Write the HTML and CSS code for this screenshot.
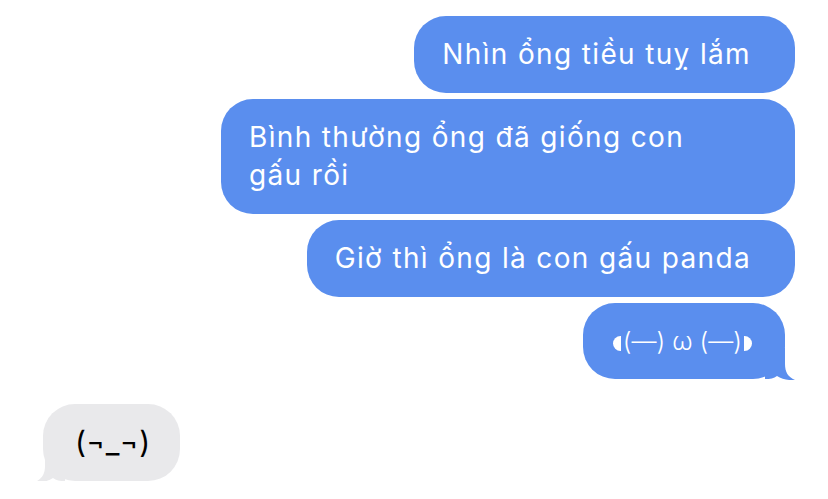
FILE: index.html
```html
<!DOCTYPE html>
<html lang="vi">
<head>
  <meta charset="UTF-8">
  <meta name="viewport" content="width=device-width, initial-scale=1.0">
  <title>Tin nhắn</title>
  <link rel="stylesheet" href="styles.css">
</head>
<body>
  <div class="thread">
    <div class="bubble sent">Nhìn ổng tiều tuỵ lắm</div>
    <div class="bubble sent wrap">Bình thường ổng đã giống con gấu rồi</div>
    <div class="bubble sent">Giờ thì ổng là con gấu panda</div>
    <div class="bubble sent last">
      <span class="kao"><span class="disc left"></span>(—) ω (—)<span class="disc right"></span></span>
      <svg class="tail" viewBox="0 0 30 32" aria-hidden="true">
        <path d="M0 0 H20 V16 C20 24 23 29 30 32 C24 32.5 17 31.5 12 28 C9 30.5 5 31 0 31 Z"/>
      </svg>
    </div>
    <div class="bubble received last">
      <span class="kao">(¬_¬)</span>
      <svg class="tail" viewBox="0 0 30 32" aria-hidden="true">
        <path d="M0 0 H20 V16 C20 24 23 29 30 32 C24 32.5 17 31.5 12 28 C9 30.5 5 31 0 31 Z"/>
      </svg>
    </div>
  </div>
</body>
</html>
```

FILE: styles.css
```css
:root {
  --blue: #5a8eee;
  --gray: #e9e9eb;
}

* {
  box-sizing: border-box;
}

body {
  margin: 0;
  background: #ffffff;
  font-family: Inter, "Noto Sans", sans-serif;
}

.thread {
  display: flex;
  flex-direction: column;
  gap: 6px;
  padding: 16px 33px 0 43px;
}

.bubble {
  position: relative;
  font-size: 28px;
  letter-spacing: 1.35px;
  line-height: 38px;
  padding: 19px 44px 20px 28px;
  border-radius: 32px;
}

.sent {
  align-self: flex-end;
  background: var(--blue);
  color: #ffffff;
}

.wrap {
  max-width: 574px;
  padding-right: 50px;
}

.sent.last {
  display: flex;
  margin-right: 10px;
  padding: 19px 33px 19px 30px;
}

.received {
  display: flex;
  align-self: flex-start;
  background: var(--gray);
  color: #000000;
  margin-top: 19px;
  padding: 19px 30px 20px 32px;
}

.kao {
  display: block;
  height: 38px;
  font-size: 28px;
  line-height: 38px;
  letter-spacing: 0;
  white-space: nowrap;
}

.sent .kao {
  font-size: 25px;
  font-weight: 300;
}

.received .kao {
  font-size: 30px;
}

.disc {
  display: inline-block;
  width: 8px;
  height: 15px;
  background: #ffffff;
  vertical-align: -1px;
}

.disc.left {
  border-radius: 8px 0 0 8px;
  margin-right: 2px;
}

.disc.right {
  border-radius: 0 8px 8px 0;
  margin-left: 2px;
}

.tail {
  position: absolute;
  bottom: -1px;
  width: 30px;
  height: 32px;
}

.sent .tail {
  right: -10px;
  fill: var(--blue);
}

.received .tail {
  left: -8px;
  fill: var(--gray);
  transform: scaleX(-1);
}
```
